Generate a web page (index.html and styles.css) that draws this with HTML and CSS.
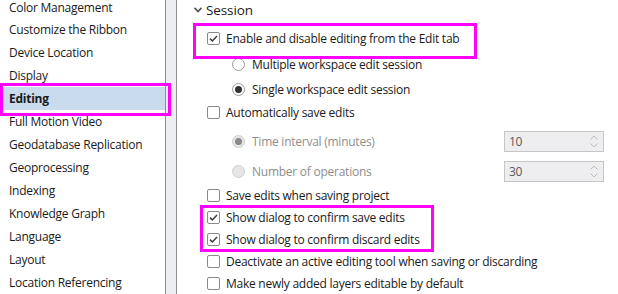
FILE: index.html
```html
<!DOCTYPE html>
<html lang="en">
<head>
  <meta charset="UTF-8" />
  <title>Options - Editing</title>
  <link rel="stylesheet" href="styles.css">
</head>
<body>
  <div class="options">
    <ul class="nav">
      <li>Color Management</li>
      <li>Customize the Ribbon</li>
      <li>Device Location</li>
      <li>Display</li>
      <li class="active">Editing</li>
      <li>Full Motion Video</li>
      <li>Geodatabase Replication</li>
      <li>Geoprocessing</li>
      <li>Indexing</li>
      <li>Knowledge Graph</li>
      <li>Language</li>
      <li>Layout</li>
      <li>Location Referencing</li>
    </ul>

    <div class="splitter"></div>

    <div class="panel">
      <div class="section-head">
        <svg class="chevron" width="8" height="6" viewBox="0 0 8 6"><path d="M0.5 0.8 L4 4.5 L7.5 0.8" fill="none" stroke="#505050" stroke-width="1.6"/></svg>
        <span>Session</span>
      </div>

      <div class="row row-enable marked">
        <span class="check on"><svg width="11" height="11" viewBox="0 0 11 11"><path d="M2 5.6 L4.4 8 L9 3" fill="none" stroke="#3c3c3c" stroke-width="1.5"/></svg></span>
        <span>Enable and disable editing from the Edit tab</span>
      </div>

      <div class="row sub row-multi">
        <span class="radio"></span>
        <span>Multiple workspace edit session</span>
      </div>
      <div class="row sub row-single">
        <span class="radio on"></span>
        <span>Single workspace edit session</span>
      </div>

      <div class="row row-auto">
        <span class="check"></span>
        <span>Automatically save edits</span>
      </div>

      <div class="row sub spin-row disabled">
        <span class="radio on"></span>
        <span>Time interval (minutes)</span>
        <div class="spin">
          <span>10</span>
          <span class="arrows">
            <svg width="8" height="5" viewBox="0 0 8 5"><path d="M0.5 4.5 L4 1 L7.5 4.5" fill="none" stroke="#bcbcbc" stroke-width="1"/></svg>
            <svg width="8" height="5" viewBox="0 0 8 5"><path d="M0.5 0.5 L4 4 L7.5 0.5" fill="none" stroke="#bcbcbc" stroke-width="1"/></svg>
          </span>
        </div>
      </div>
      <div class="row sub spin-row disabled">
        <span class="radio"></span>
        <span>Number of operations</span>
        <div class="spin">
          <span>30</span>
          <span class="arrows">
            <svg width="8" height="5" viewBox="0 0 8 5"><path d="M0.5 4.5 L4 1 L7.5 4.5" fill="none" stroke="#bcbcbc" stroke-width="1"/></svg>
            <svg width="8" height="5" viewBox="0 0 8 5"><path d="M0.5 0.5 L4 4 L7.5 0.5" fill="none" stroke="#bcbcbc" stroke-width="1"/></svg>
          </span>
        </div>
      </div>

      <div class="row row-save">
        <span class="check"></span>
        <span>Save edits when saving project</span>
      </div>

      <div class="confirm marked">
        <div class="row">
          <span class="check on"><svg width="11" height="11" viewBox="0 0 11 11"><path d="M2 5.6 L4.4 8 L9 3" fill="none" stroke="#3c3c3c" stroke-width="1.5"/></svg></span>
          <span>Show dialog to confirm save edits</span>
        </div>
        <div class="row">
          <span class="check on"><svg width="11" height="11" viewBox="0 0 11 11"><path d="M2 5.6 L4.4 8 L9 3" fill="none" stroke="#3c3c3c" stroke-width="1.5"/></svg></span>
          <span>Show dialog to confirm discard edits</span>
        </div>
      </div>

      <div class="row">
        <span class="check"></span>
        <span>Deactivate an active editing tool when saving or discarding</span>
      </div>
      <div class="row">
        <span class="check"></span>
        <span>Make newly added layers editable by default</span>
      </div>
    </div>
  </div>
</body>
</html>
```

FILE: styles.css
```css
* {
  margin: 0;
  padding: 0;
  box-sizing: border-box;
}

body {
  background-color: #ffffff;
  font-family: 'Open Sans', 'Noto Sans', sans-serif;
  font-size: 12px;
  letter-spacing: -0.25px;
  color: #1a1a1a;
  overflow: hidden;
}

.options {
  display: flex;
  height: 294px;
  overflow: hidden;
}

/* left list */
.nav {
  list-style: none;
  width: 165px;
  flex-shrink: 0;
}

.nav li {
  height: 23px;
  line-height: 23px;
  padding-left: 9px;
  white-space: nowrap;
}

.nav li:first-child {
  height: 18px;
  line-height: 16px;
}

.nav li.active {
  position: relative;
  background-color: #c8dcee;
  font-weight: 700;
}

.nav li.active::after {
  content: '';
  position: absolute;
  left: 0;
  top: -4px;
  width: 165px;
  height: 27px;
  border: 3px solid #ff00ff;
}

.splitter {
  width: 12px;
  flex-shrink: 0;
  background-color: #eceef1;
  border-left: 1px solid #8e8e8e;
  border-right: 1px solid #8e8e8e;
}

/* right panel */
.panel {
  flex: 1;
  padding-left: 30px;
  padding-right: 14px;
  display: flex;
  flex-direction: column;
}

.section-head {
  height: 20px;
  display: flex;
  align-items: center;
  margin-left: -13px;
  font-size: 13.5px;
  letter-spacing: -0.1px;
}

.chevron {
  margin-right: 4px;
}

.row {
  height: 22px;
  display: flex;
  align-items: center;
  gap: 6px;
  white-space: nowrap;
}

.row.sub {
  padding-left: 25px;
  gap: 7px;
}

.row-enable { margin-top: 8px; }
.row-multi { margin-top: 4px; }
.row-single { margin-top: 3px; }
.row-auto { margin-top: 1px; }
.spin-row { margin-top: 8px; }
.row-save { margin-top: 2px; }

.marked {
  position: relative;
}

.row-enable::after {
  content: '';
  position: absolute;
  left: -14px;
  top: -5px;
  width: 278px;
  height: 30px;
  border: 3px solid #ff00ff;
}

.confirm::after {
  content: '';
  position: absolute;
  left: -7px;
  top: -1px;
  width: 228px;
  height: 41px;
  border: 3px solid #ff00ff;
}

.check {
  width: 13px;
  height: 13px;
  flex-shrink: 0;
  border: 1px solid #8a8a8a;
  border-radius: 2px;
  background-color: #ffffff;
  display: flex;
  align-items: center;
  justify-content: center;
}

.radio {
  width: 13px;
  height: 13px;
  flex-shrink: 0;
  border: 1px solid #9a9a9a;
  border-radius: 50%;
  background-color: #ffffff;
  display: flex;
  align-items: center;
  justify-content: center;
}

.radio.on::before {
  content: '';
  width: 7px;
  height: 7px;
  border-radius: 50%;
  background-color: #333333;
}

.disabled {
  color: #8e8e8e;
}

.disabled .radio {
  background-color: #e6e6e6;
  border-color: #cfcfcf;
}

.disabled .radio.on::before {
  background-color: #8a8a8a;
}

.spin {
  margin-left: auto;
  width: 100px;
  height: 21px;
  background-color: #eeeef1;
  border: 1px solid #c6c6c6;
  display: flex;
  align-items: center;
  justify-content: space-between;
  padding: 0 5px 0 4px;
  color: #5a5a5a;
}

.arrows {
  display: flex;
  flex-direction: column;
  gap: 3px;
}

.arrows svg {
  display: block;
}
```
